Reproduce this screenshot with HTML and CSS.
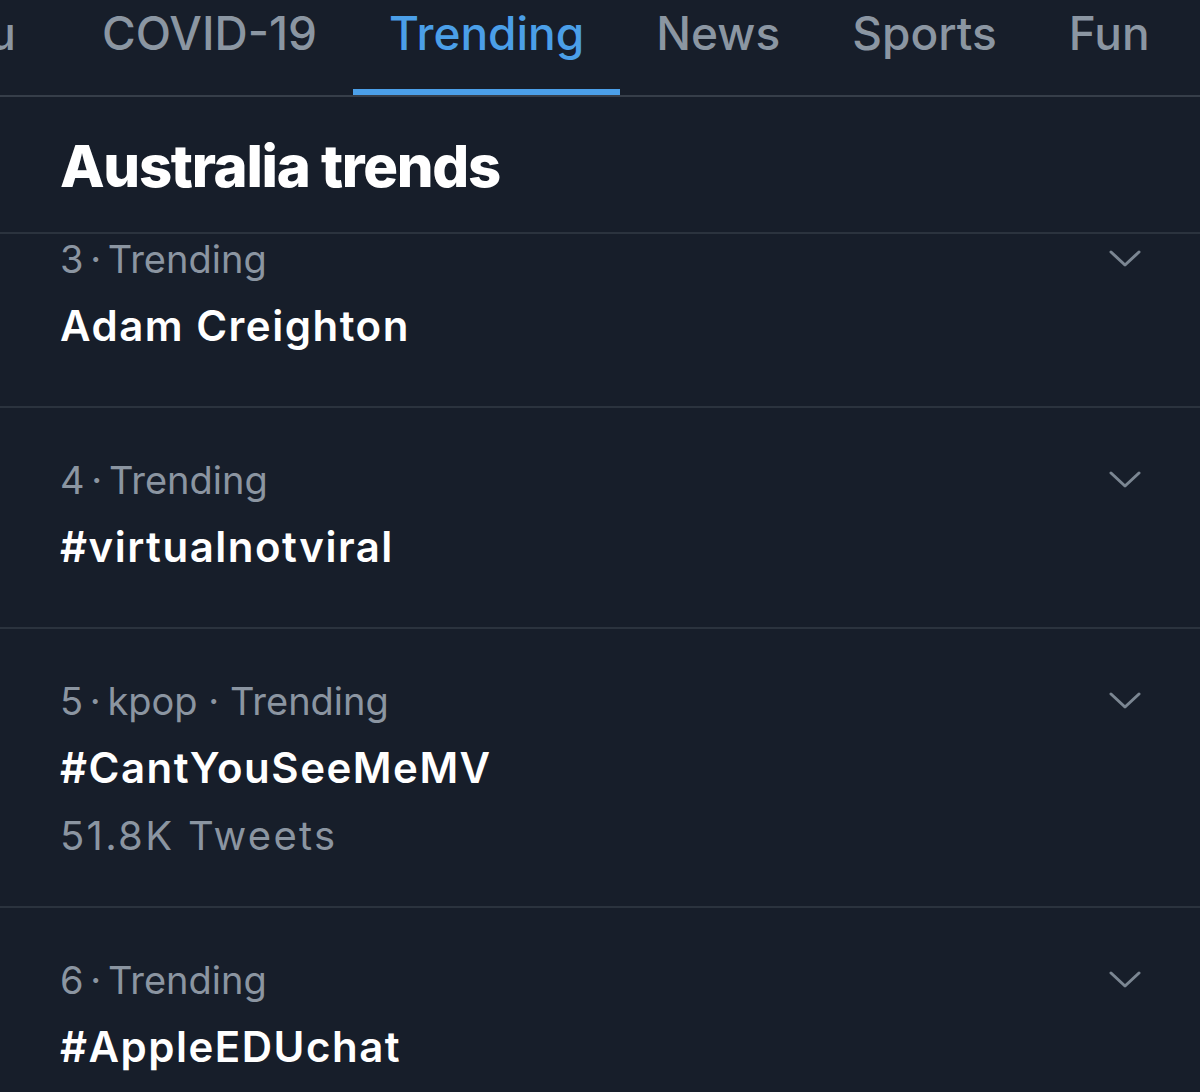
FILE: index.html
```html
<!DOCTYPE html>
<html lang="en">
<head>
<meta charset="utf-8">
<title>Trends</title>
<link rel="stylesheet" href="styles.css">
</head>
<body>
<div class="screen">
  <nav class="tabs">
    <div class="tab tab-cut"><span>For you</span></div>
    <div class="tab"><span>COVID-19</span></div>
    <div class="tab active"><span>Trending</span></div>
    <div class="tab"><span>News</span></div>
    <div class="tab"><span>Sports</span></div>
    <div class="tab"><span>Fun</span></div>
  </nav>
  <header class="section-head">
    <h1>Australia trends</h1>
  </header>
  <div class="list">
    <div class="trend scrolled">
      <div class="trend-body">
        <div class="meta"><span class="rank">3 · </span>Trending</div>
        <div class="title">Adam Creighton</div>
      </div>
      <svg class="chev" viewBox="0 0 32 18"><path d="M2 2 L16 15 L30 2"/></svg>
    </div>
    <div class="trend">
      <div class="trend-body">
        <div class="meta"><span class="rank">4 · </span>Trending</div>
        <div class="title">#virtualnotviral</div>
      </div>
      <svg class="chev" viewBox="0 0 32 18"><path d="M2 2 L16 15 L30 2"/></svg>
    </div>
    <div class="trend">
      <div class="trend-body">
        <div class="meta"><span class="rank">5 · </span>kpop · Trending</div>
        <div class="title">#CantYouSeeMeMV</div>
        <div class="count">51.8K Tweets</div>
      </div>
      <svg class="chev" viewBox="0 0 32 18"><path d="M2 2 L16 15 L30 2"/></svg>
    </div>
    <div class="trend">
      <div class="trend-body">
        <div class="meta"><span class="rank">6 · </span>Trending</div>
        <div class="title">#AppleEDUchat</div>
      </div>
      <svg class="chev" viewBox="0 0 32 18"><path d="M2 2 L16 15 L30 2"/></svg>
    </div>
  </div>
</div>
</body>
</html>
```

FILE: styles.css
```css
* { box-sizing: border-box; }
html, body {
  margin: 0;
  padding: 0;
  background: #171e2a;
}
body {
  font-family: Inter, "Noto Sans", "Liberation Sans", sans-serif;
  color: #ffffff;
}
.screen {
  width: 1200px;
  height: 1092px;
  overflow: hidden;
  background: #171e2a;
}
.tabs {
  display: flex;
  height: 97px;
  border-bottom: 2px solid #363e49;
  overflow: hidden;
}
.tab {
  flex: 0 0 auto;
  display: flex;
  align-items: flex-start;
  padding: 0 36px;
  font-size: 46px;
  font-weight: 500;
  line-height: 66px;
  color: #8b96a2;
  white-space: nowrap;
}
.tab-cut {
  flex: 0 0 66px;
  justify-content: flex-end;
  padding: 0 50px 0 0;
  overflow: hidden;
}
.tab.active {
  color: #4b9fe8;
  border-bottom: 6px solid #4b9fe8;
}
.section-head {
  height: 137px;
  padding: 0 60px;
  border-bottom: 2px solid #2b333e;
}
.section-head h1 {
  margin: 0;
  font-size: 58px;
  font-weight: 800;
  line-height: 138px;
  letter-spacing: -1.3px;
}
.list {
  overflow: hidden;
}
.trend {
  display: flex;
  justify-content: space-between;
  align-items: flex-start;
  padding: 38px 59px 47px 60px;
  border-bottom: 2px solid #2b333e;
}
.trend.scrolled {
  margin-top: -47px;
}
.meta {
  font-size: 38px;
  line-height: 68px;
  color: #8b95a1;
}
.rank {
  word-spacing: -4px;
}
.title {
  font-size: 42px;
  font-weight: 600;
  line-height: 66px;
  letter-spacing: 1.5px;
}
.count {
  font-size: 40px;
  line-height: 70px;
  letter-spacing: 2.3px;
  margin-bottom: -12px;
  color: #8b95a1;
}
.chev {
  width: 32px;
  height: 18px;
  margin-top: 25px;
  fill: none;
  stroke: #7b8692;
  stroke-width: 3;
  stroke-linecap: round;
  stroke-linejoin: round;
}
```
